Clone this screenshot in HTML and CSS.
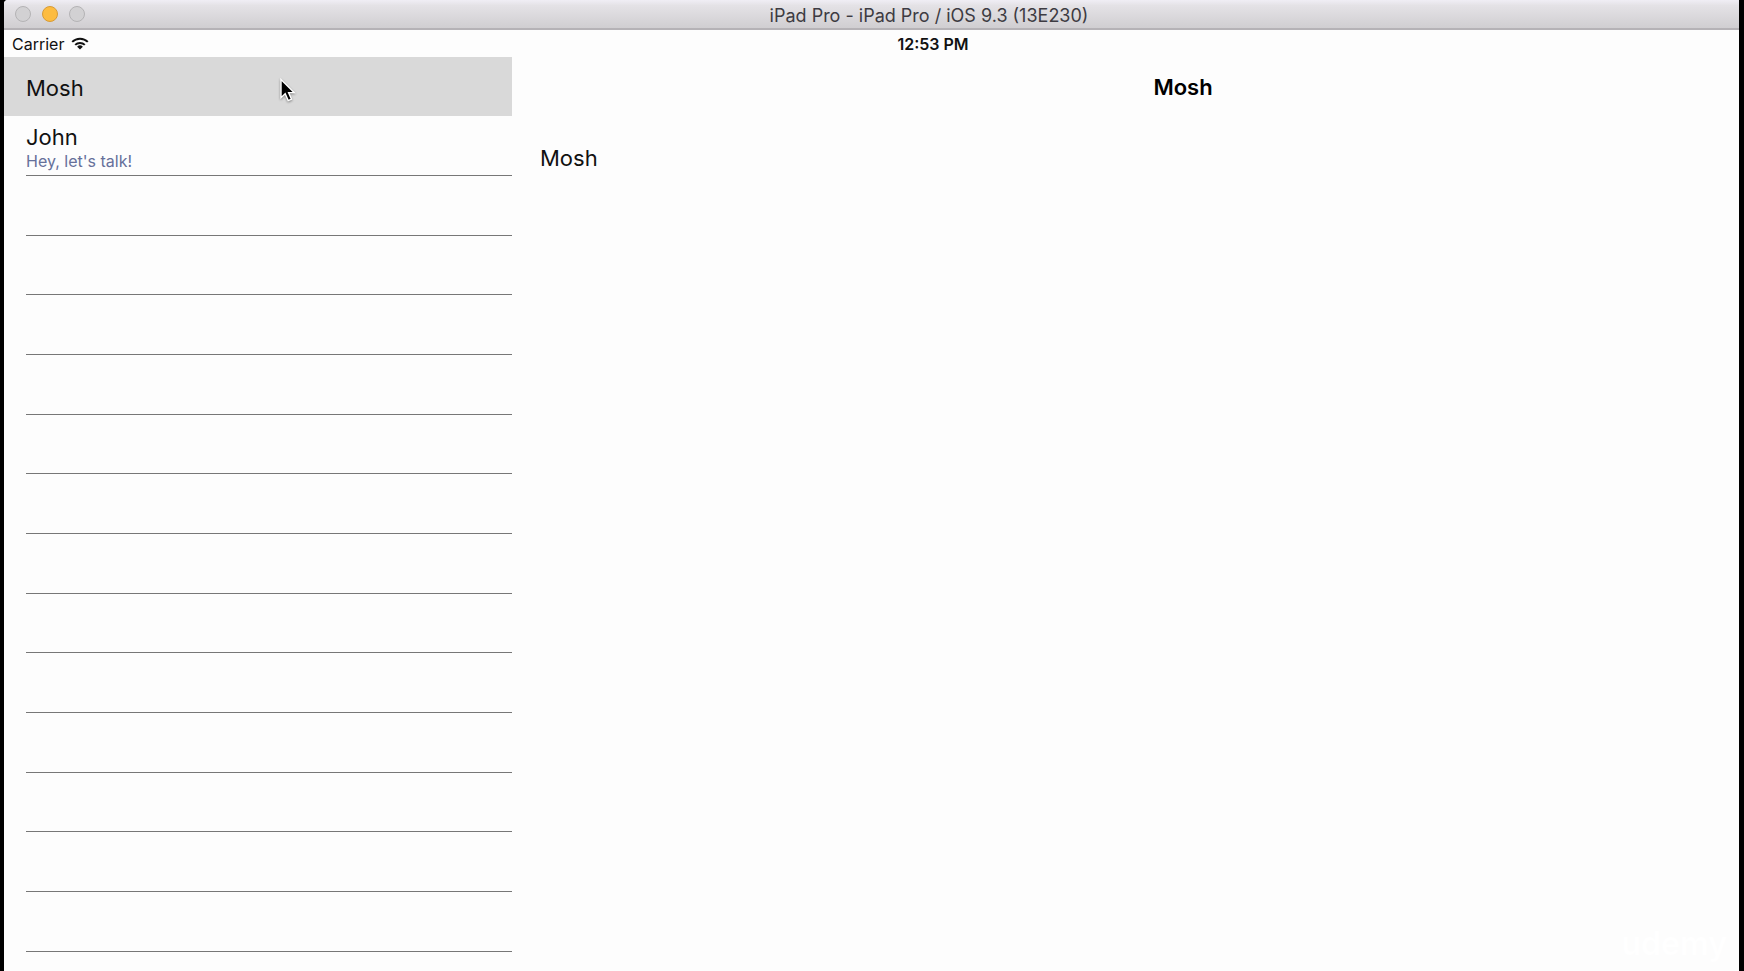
FILE: index.html
```html
<!DOCTYPE html>
<html lang="en">
<head>
<meta charset="utf-8">
<title>iPad Pro - iPad Pro / iOS 9.3 (13E230)</title>
<link rel="stylesheet" href="styles.css">
</head>
<body>
<div class="window">
  <header class="titlebar">
    <div class="lights">
      <button class="light" aria-label="Close"></button>
      <button class="light minimize" aria-label="Minimize"></button>
      <button class="light" aria-label="Zoom"></button>
    </div>
    <h1 class="window-title">iPad Pro - iPad Pro / iOS 9.3 (13E230)</h1>
    <div></div>
  </header>
  <div class="screen">
    <div class="statusbar">
      <div class="carrier">
        <span>Carrier</span>
        <svg class="wifi" viewBox="0 0 18 13" width="18" height="13" aria-hidden="true">
          <path d="M1.2 4.9a11 11 0 0 1 15.6 0M4.2 7.9a6.8 6.8 0 0 1 9.6 0" fill="none" stroke="#111" stroke-width="2"/>
          <path d="M9 12.6 6.1 9.7a4.1 4.1 0 0 1 5.8 0z" fill="#111"/>
        </svg>
      </div>
      <time class="clock">12:53 PM</time>
      <div></div>
    </div>
    <div class="split">
      <ul class="contacts">
        <li class="row selected"><span class="name">Mosh</span></li>
        <li class="row"><span class="name">John</span><span class="status">Hey, let's talk!</span></li>
        <li class="row"></li><li class="row"></li><li class="row"></li>
        <li class="row"></li><li class="row"></li><li class="row"></li>
        <li class="row"></li><li class="row"></li><li class="row"></li>
        <li class="row"></li><li class="row"></li><li class="row"></li>
        <li class="row"></li><li class="row"></li>
      </ul>
      <main class="detail">
        <h2 class="navbar">Mosh</h2>
        <p class="detail-text">Mosh</p>
      </main>
    </div>
  </div>
  <span class="watermark">udemy</span>
  <svg class="cursor" viewBox="0 0 18 26" width="18" height="26" aria-hidden="true">
    <path d="M2 1.5v18.2l4.2-3.9 3 6.8 3.3-1.4-2.9-6.6h5.5z" fill="#000" stroke="#fff" stroke-width="1.4"/>
  </svg>
</div>
</body>
</html>
```
FILE: styles.css
```css
* {
  box-sizing: border-box;
}

body {
  margin: 0;
  background: #000;
  color: #111;
  font-family: Inter, "Liberation Sans", sans-serif;
}

h1, h2, p, ul {
  margin: 0;
  padding: 0;
}

.window {
  position: relative;
  display: flex;
  flex-direction: column;
  height: 100vh;
  margin: 0 5px 0 4px;
  overflow: hidden;
  border-top-left-radius: 4px;
  background: #fdfdfd;
}

/* The simulated device is wider than the visible area and runs off its right edge. */
.titlebar,
.screen {
  margin-right: -115px;
}

.titlebar {
  display: grid;
  grid-template-columns: 1fr auto 1fr;
  align-items: center;
  flex: none;
  height: 30px;
  padding: 0 11px;
  border-bottom: 2px solid #b5b2b6;
  background: linear-gradient(#f0eef5, #e4e2e6 20%, #d0ced1);
}

.lights {
  display: flex;
  gap: 11px;
}

.light {
  width: 16px;
  height: 16px;
  padding: 0;
  border: 1px solid #b4b3b5;
  border-radius: 50%;
  background: #d2d1d3;
}

.minimize {
  border-color: #d79b36;
  background: #fdbc40;
}

.window-title {
  padding-top: 3px;
  color: #3d3b42;
  font-size: 18px;
  font-weight: 400;
  line-height: 24px;
}

.screen {
  display: flex;
  flex-direction: column;
  flex: 1;
  min-height: 0;
}

.statusbar {
  display: grid;
  grid-template-columns: 1fr auto 1fr;
  align-items: center;
  flex: none;
  height: 27px;
  padding: 0 0 0 8px;
  font-size: 16px;
}

.carrier {
  display: flex;
  align-items: center;
  gap: 7px;
}

.clock {
  font-weight: 600;
}

.split {
  display: grid;
  grid-template-columns: 508px 1fr;
  flex: 1;
  min-height: 0;
}

.contacts {
  overflow: hidden;
  list-style: none;
}

.row {
  display: flex;
  flex-direction: column;
  justify-content: center;
  height: 60px;
  margin-left: 22px;
  padding-top: 2px;
  border-bottom: 1px solid #777;
}

.row:nth-child(3n+1) {
  height: 59px;
}

.selected {
  margin-left: 0;
  padding-left: 22px;
  border-bottom: 0;
  background: #d9d9d9;
}

.name {
  font-size: 22px;
  line-height: 28px;
}

.status {
  color: #66709a;
  font-size: 16px;
  line-height: 20px;
}

.navbar {
  height: 60px;
  color: #000;
  font-size: 22px;
  font-weight: 600;
  line-height: 60px;
  text-align: center;
}

.detail-text {
  padding: 27px 28px;
  font-size: 22px;
  line-height: 28px;
}

.watermark {
  position: absolute;
  right: 12px;
  bottom: 7px;
  color: #fff;
  font-size: 32px;
  font-weight: 600;
  line-height: 40px;
}

.cursor {
  position: absolute;
  top: 78px;
  left: 275px;
  filter: drop-shadow(0 1px 1px #0006);
}
```
